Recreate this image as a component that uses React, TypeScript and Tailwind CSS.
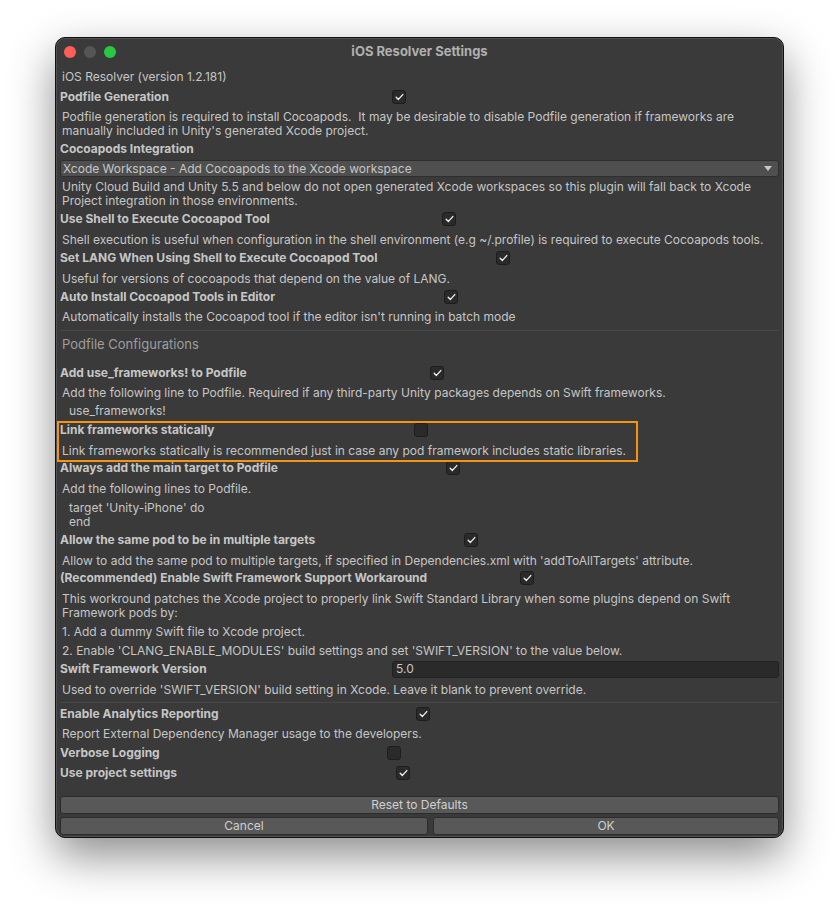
import React from 'react';

type ToggleProps = { label: string; at: string; on?: boolean; className?: string };

const Check = ({ on }: { on?: boolean }) => (
  <span className="flex h-[14px] w-[14px] shrink-0 items-center justify-center rounded-[3px] border border-[#1d1d1d] bg-[#2a2a2a]">
    {on && (
      <svg width="9" height="8" viewBox="0 0 9 8">
        <path d="M1.2 4.3 3.4 6.4 7.8 1.6" fill="none" stroke="#eeeeee" strokeWidth="1.4" strokeLinecap="round" strokeLinejoin="round" />
      </svg>
    )}
  </span>
);

// bold label followed by a toggle; `at` fixes where the box sits
const Toggle = ({ label, at, on, className = '' }: ToggleProps) => (
  <div className={`flex h-[18px] items-center ${className}`}>
    <span className={`${at} shrink-0 font-bold`}>{label}</span>
    <Check on={on} />
  </div>
);

const Help = ({ children, className = '' }: { children: React.ReactNode; className?: string }) => (
  <p className={`pl-[2px] leading-[14px] ${className}`}>{children}</p>
);

const Code = ({ children, className = '' }: { children: React.ReactNode; className?: string }) => (
  <p className={`pl-[9px] leading-[14px] ${className}`}>{children}</p>
);

const Button = ({ children, className = '' }: { children: React.ReactNode; className?: string }) => (
  <button className={`flex h-[18px] items-center justify-center rounded-[3px] border border-[#2c2c2c] bg-[#585858] text-[12px] text-[#d0d0d0] ${className}`}>
    {children}
  </button>
);

export default function App() {
  return (
    <div className="h-[911px] w-[839px] bg-white pl-[55px] pt-[37px] font-['Inter',sans-serif]">
      <div className="w-[729px] rounded-[10px] border border-[#111] bg-[#3a3a3a] shadow-[0_18px_45px_rgba(0,0,0,0.45),inset_0_0_0_1px_rgba(255,255,255,0.12)]">
        {/* title bar */}
        <div className="relative flex h-[28px] items-center px-[8px]">
          <div className="flex gap-[8px]">
            <span className="h-[12px] w-[12px] rounded-full bg-[#ff5f57]" />
            <span className="h-[12px] w-[12px] rounded-full bg-[#555555]" />
            <span className="h-[12px] w-[12px] rounded-full bg-[#28c840]" />
          </div>
          <span className="absolute inset-x-0 top-[4px] text-center text-[13px] font-bold text-[#b0b0b0]">iOS Resolver Settings</span>
        </div>

        <div className="flex flex-col px-[4px] pb-[2px] pt-[4px] text-[12px] text-[#c6c6c6]">
          <Help>iOS Resolver (version 1.2.181)</Help>

          <Toggle className="mt-[4px]" label="Podfile Generation" at="w-[332px]" on />
          <Help className="mt-[4px]">
            Podfile generation is required to install Cocoapods.&nbsp; It may be desirable to disable Podfile generation if frameworks are
            <br />
            manually included in Unity's generated Xcode project.
          </Help>

          <div className="mt-[2px] flex h-[18px] items-center font-bold">Cocoapods Integration</div>
          <div className="mt-[2px] flex h-[17px] items-center justify-between rounded-[3px] border border-[#2e2e2e] bg-[#4f4f4f] pl-[2px] pr-[6px]">
            <span>Xcode Workspace - Add Cocoapods to the Xcode workspace</span>
            <svg width="8" height="5" viewBox="0 0 8 5">
              <path d="M0 0h8L4 5z" fill="#c8c8c8" />
            </svg>
          </div>
          <Help className="mt-[3px]">
            Unity Cloud Build and Unity 5.5 and below do not open generated Xcode workspaces so this plugin will fall back to Xcode
            <br />
            Project integration in those environments.
          </Help>

          <Toggle className="mt-[2px]" label="Use Shell to Execute Cocoapod Tool" at="w-[382px]" on />
          <Help className="mt-[5px]">
            Shell execution is useful when configuration in the shell environment (e.g ~/.profile) is required to execute Cocoapods tools.
          </Help>

          <Toggle className="mt-[2px]" label="Set LANG When Using Shell to Execute Cocoapod Tool" at="w-[436px]" on />
          <Help className="mt-[5px]">Useful for versions of cocoapods that depend on the value of LANG.</Help>

          <Toggle className="mt-[2px]" label="Auto Install Cocoapod Tools in Editor" at="w-[384px]" on />
          <Help className="mt-[4px]">Automatically installs the Cocoapod tool if the editor isn't running in batch mode</Help>

          <div className="mt-[6px] h-px bg-[#474747]" />

          <p className="mt-[5px] pl-[2px] text-[13px] leading-[16px] text-[#9e9e9e]">Podfile Configurations</p>

          <Toggle className="mt-[12px]" label="Add use_frameworks! to Podfile" at="w-[370px]" on />
          <Help className="mt-[4px]">
            Add the following line to Podfile. Required if any third-party Unity packages depends on Swift frameworks.
          </Help>
          <Code className="mt-[4px]">use_frameworks!</Code>

          {/* highlighted group */}
          <div className="relative mt-[3px]">
            <Toggle label="Link frameworks statically" at="w-[354px]" />
            <Help className="mt-[5px]">
              Link frameworks statically is recommended just in case any pod framework includes static libraries.
            </Help>
            <span className="pointer-events-none absolute left-[-3px] top-0 h-[41px] w-[581px] border-2 border-[#f7930e]" />
          </div>

          <Toggle className="mt-[1px]" label="Always add the main target to Podfile" at="w-[386px]" on />
          <Help className="mt-[5px]">Add the following lines to Podfile.</Help>
          <Code className="mt-[5px]">
            target 'Unity-iPhone' do
            <br />
            end
          </Code>

          <Toggle className="mt-[2px]" label="Allow the same pod to be in multiple targets" at="w-[404px]" on />
          <Help className="mt-[5px]">
            Allow to add the same pod to multiple targets, if specified in Dependencies.xml with 'addToAllTargets' attribute.
          </Help>

          <Toggle className="mt-[1px]" label="(Recommended) Enable Swift Framework Support Workaround" at="w-[460px]" on />
          <Help className="mt-[5px]">
            This workround patches the Xcode project to properly link Swift Standard Library when some plugins depend on Swift
            <br />
            Framework pods by:
          </Help>
          <Help className="mt-[5px]">1. Add a dummy Swift file to Xcode project.</Help>
          <Help className="mt-[5px]">
            2. Enable 'CLANG_ENABLE_MODULES' build settings and set 'SWIFT_VERSION' to the value below.
          </Help>

          <div className="mt-[2px] flex h-[18px] items-center">
            <span className="w-[332px] shrink-0 font-bold">Swift Framework Version</span>
            <div className="flex h-[17px] flex-1 items-center rounded-[3px] border border-[#212121] bg-[#2a2a2a] pl-[3px]">5.0</div>
          </div>
          <Help className="mt-[5px]">
            Used to override 'SWIFT_VERSION' build setting in Xcode. Leave it blank to prevent override.
          </Help>

          <div className="mt-[5px] h-px bg-[#474747]" />

          <Toggle className="mt-[2px]" label="Enable Analytics Reporting" at="w-[356px]" on />
          <Help className="mt-[4px]">Report External Dependency Manager usage to the developers.</Help>
          <Toggle className="mt-[3px]" label="Verbose Logging" at="w-[327px]" />
          <Toggle className="mt-[2px]" label="Use project settings" at="w-[336px]" on />

          <Button className="mt-[14px] w-full">Reset to Defaults</Button>
          <div className="mt-[3px] flex gap-[5px]">
            <Button className="w-[368px]">Cancel</Button>
            <Button className="flex-1">OK</Button>
          </div>
        </div>
      </div>
    </div>
  );
}
